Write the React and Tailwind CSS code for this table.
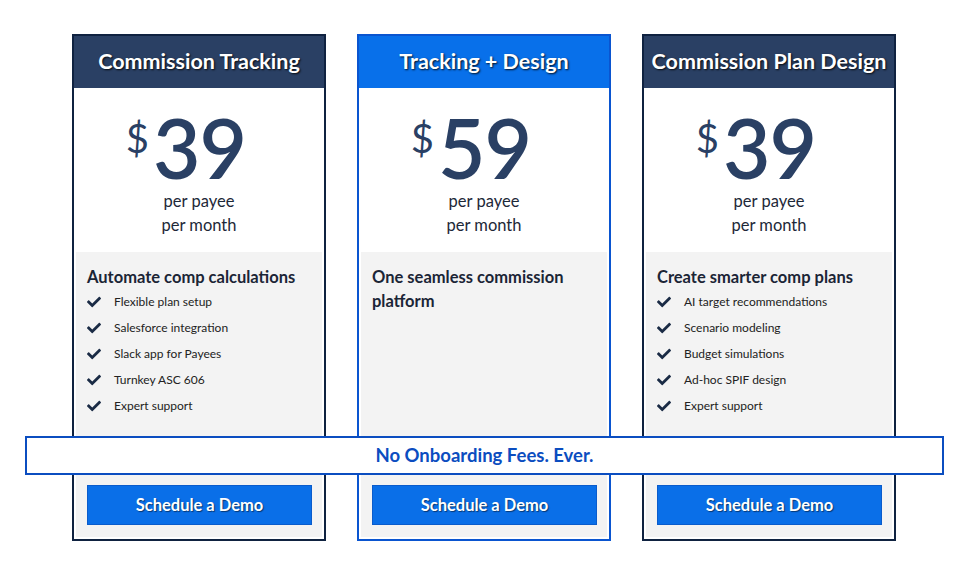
import React from "react";
import { FaCheck } from "react-icons/fa";

const plans = [
  {
    title: "Commission Tracking",
    price: "39",
    featured: false,
    heading: "Automate comp calculations",
    items: ["Flexible plan setup", "Salesforce integration", "Slack app for Payees", "Turnkey ASC 606", "Expert support"],
  },
  {
    title: "Tracking + Design",
    price: "59",
    featured: true,
    heading: "One seamless commission platform",
    items: [],
  },
  {
    title: "Commission Plan Design",
    price: "39",
    featured: false,
    heading: "Create smarter comp plans",
    items: ["AI target recommendations", "Scenario modeling", "Budget simulations", "Ad-hoc SPIF design", "Expert support"],
  },
];

function Card({ plan }) {
  return (
    <div
      className={
        "flex h-[507px] w-[254px] flex-col border-2 bg-white " +
        (plan.featured ? "border-[#0a55d0]" : "border-[#0f2240]")
      }
    >
      <div
        className={
          "flex h-[52px] items-center justify-center whitespace-nowrap pb-[1px] text-[21.5px] font-bold text-white [text-shadow:1px_1px_2px_rgba(0,0,0,0.85)] " +
          (plan.featured ? "bg-[#0870ea]" : "bg-[#2a4064]")
        }
      >
        {plan.title}
      </div>
      <div className="flex flex-1 flex-col px-[2px] pb-[2px]">
        <div className="flex h-[164px] flex-col items-center pt-[20px]">
          <div className="flex h-[78px] items-start pr-[26px] text-[#2a4064]">
            <span className="mt-[10px] mr-[4px] text-[40px] leading-none">$</span>
            <span className="text-[82px] font-semibold leading-[78px] tracking-[-1px]">{plan.price}</span>
          </div>
          <div className="mt-[3px] text-center text-[16.5px] leading-[24px] text-[#1d2838]">
            <div>per payee</div>
            <div>per month</div>
          </div>
        </div>
        <div className="flex flex-1 flex-col bg-[#f3f3f3] px-[11px] pt-[13px]">
          <div className="text-[16.5px] font-bold leading-[24px] text-[#1b2536]">{plan.heading}</div>
          <ul>
            {plan.items.map((it) => (
              <li key={it} className="flex h-[26px] items-center text-[12px] text-[#222]">
                <FaCheck className="mr-[13px] h-[14px] w-[14px] text-[#1a2b45]" />
                {it}
              </li>
            ))}
          </ul>
          <button className="mt-auto mb-[12px] h-[40px] w-[225px] border border-[#0a5ccc] bg-[#0a6fe8] text-[16.5px] font-bold text-white [text-shadow:1px_1px_1px_rgba(0,0,0,0.5)]">
            Schedule a Demo
          </button>
        </div>
      </div>
    </div>
  );
}

export default function App() {
  return (
    <div className="relative h-[574px] w-[968px] bg-white font-['Lato',sans-serif]">
      <div className="flex justify-center gap-[31px] pt-[34px]">
        {plans.map((p) => (
          <Card key={p.title} plan={p} />
        ))}
      </div>
      <div className="absolute left-[25px] top-[436px] flex h-[39px] w-[919px] items-center justify-center border-2 border-[#0b4dc0] bg-white text-[18.5px] font-bold text-[#0b4dc0]">
        No Onboarding Fees. Ever.
      </div>
    </div>
  );
}
